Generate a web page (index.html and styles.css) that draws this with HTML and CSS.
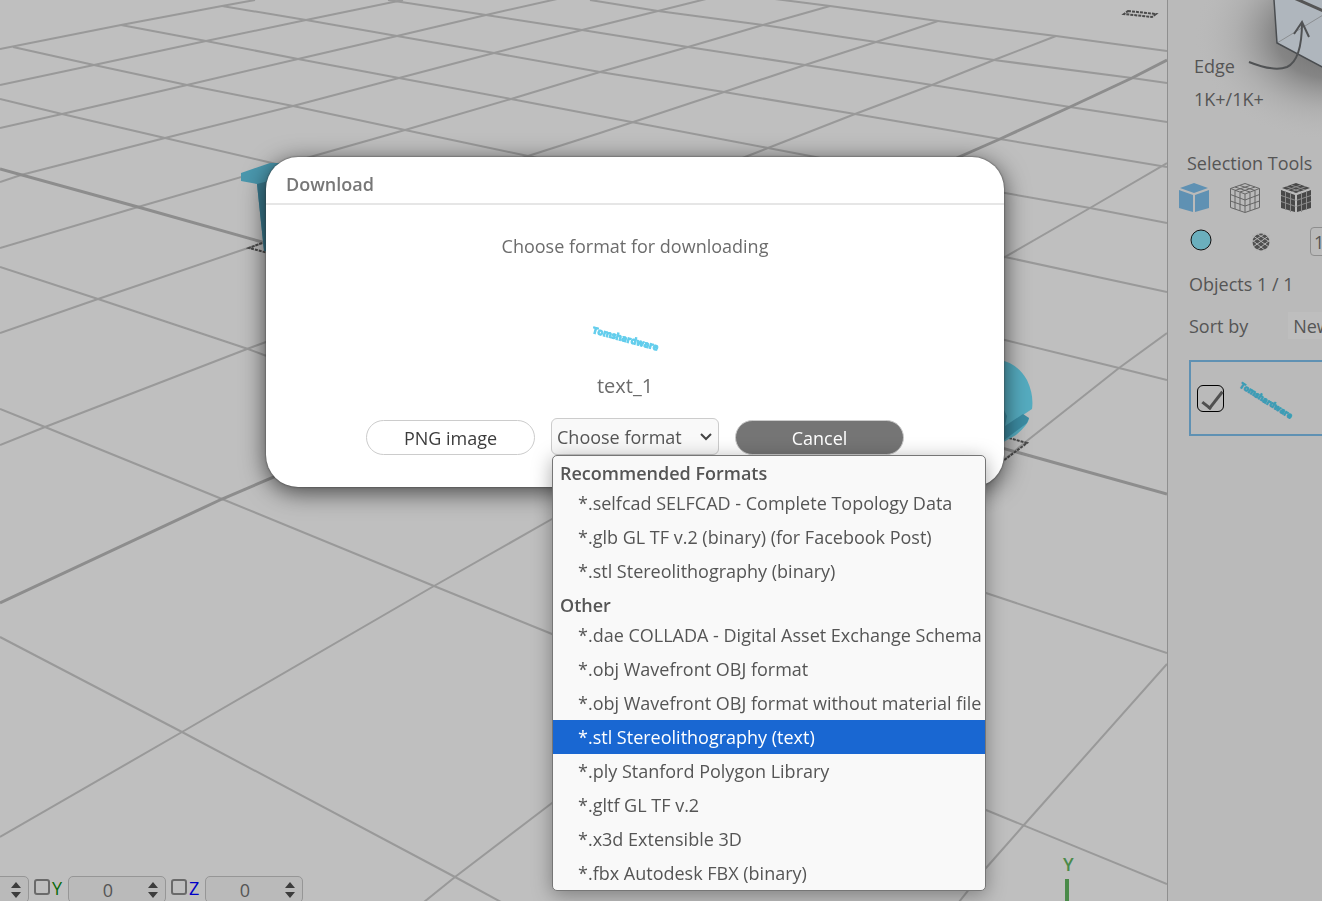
FILE: index.html
```
<!DOCTYPE html>
<html lang="en">
<head>
    <meta charset="utf-8">
    <title>Download</title>
    <link rel="stylesheet" href="styles.css">
</head>
<body>
    <div class="app">
        <main class="viewport">
            <svg class="scene" viewBox="0 0 1167 901" preserveAspectRatio="xMinYMin slice" aria-hidden="true">
                <!-- grid floor -->
                <g class="grid">
                    <path d="M0 49L121 25L222 6L255 0"/>
                    <path d="M0 85L94 65L206 41L306 20L403 0"/>
                    <path d="M0 128L62 114L187 85L298 59L397 36L486 15L557 -1"/>
                    <path d="M0 182L21 175L165 138L293 106L399 78L494 53L582 30L658 11L706 -1"/>
                    <path d="M0 248L138 207L310 157L405 130L511 99L600 72L688 47L763 25L830 6"/>
                    <path d="M0 333L98 299L248 248L528 156L600 133L724 92L805 65L876 42L938 21"/>
                    <path d="M0 445L45 427L247 349L266 342L745 157L768 148L855 114L932 85L994 60L1056 36"/>
                    <path d="M0 837L182 732L434 586L552 519L1005 257L1090 208L1167 163"/>
                    <path d="M424 902L455 877L552 803L1005 459L1028 440L1119 368L1167 333"/>
                    <path d="M959 902L986 868L1023 826L1167 664"/>
                    <path d="M775 -1L830 6L938 21L1056 36L1167 51"/>
                    <path d="M590 0L658 11L763 25L876 42L994 60L1132 78L1167 83"/>
                    <path d="M388 0L486 15L582 30L688 47L805 65L932 85L1070 107L1167 122"/>
                    <path d="M222 6L306 20L397 36L494 53L600 72L724 92L855 114L1000 139L1167 167"/>
                    <path d="M121 25L206 41L298 59L399 78L511 99L600 116L768 148L1005 193L1090 208L1167 223"/>
                    <path d="M13 47L94 65L187 85L293 106L405 130L528 156L1005 257L1167 292"/>
                    <path d="M0 99L62 114L165 138L272 163L1005 340L1119 368L1167 380"/>
                    <path d="M0 267L98 299L248 349L264 355L986 593L1167 653"/>
                    <path d="M0 409L45 427L222 499L434 586L552 634L986 810L1167 884"/>
                    <path d="M0 637L182 732L455 877L501 902"/>
                    <path class="grid-major" d="M0 603L222 499L274 477L959 157L1000 139L1070 107L1132 78L1167 60"/>
                    <path class="grid-major" d="M0 169L138 207L262 242L1020 453L1167 494"/>
                </g>

                <!-- ends of the extruded text -->
                <g class="outline">
                    <path d="M262 243L249 248L268 253M1009 438L1027 443L1003 461"/>
                    <path d="M1128 11L1156 14L1152 17L1124 14z"/>
                </g>
                <path fill="#4a97ad" d="M241 173L270 163L280 163L280 252L264 251L257 184L241 181z"/>
                <path fill="#3a788c" d="M257 184L280 178L280 252L264 251z"/>
                <path fill="#55acc0" d="M1000 360Q1017 363 1027 380Q1034 395 1032 409L1023 415Q1025 418 1029 418Q1029 424 1016 435L1000 444z"/>
                <path fill="#3c8ca3" d="M1000 402L1007 416L1005 426L1023 414L1029 418L1027 423L1003 441z"/>

                <text class="axis-name" x="1063" y="871">Y</text>
                <path fill="#4a8a49" d="M1065 879h4v22h-4z"/>
            </svg>

            <div class="axes">
                <label class="number-box">
                    <input type="text" value="0" aria-label="X value">
                    <svg class="spinner" viewBox="0 0 12 18"><path d="M1 7L6 1L11 7zM1 11L6 17L11 11z"/></svg>
                </label>
                <label class="axis axis-y"><input type="checkbox">Y</label>
                <label class="number-box">
                    <input type="text" value="0" aria-label="Y value">
                    <svg class="spinner" viewBox="0 0 12 18"><path d="M1 7L6 1L11 7zM1 11L6 17L11 11z"/></svg>
                </label>
                <label class="axis axis-z"><input type="checkbox">Z</label>
                <label class="number-box">
                    <input type="text" value="0" aria-label="Z value">
                    <svg class="spinner" viewBox="0 0 12 18"><path d="M1 7L6 1L11 7zM1 11L6 17L11 11z"/></svg>
                </label>
            </div>
        </main>

        <aside class="sidebar">
            <svg class="view-cube" viewBox="0 0 154 150" aria-hidden="true">
                <defs>
                    <radialGradient id="cubeShade">
                        <stop offset="0" stop-color="#686868"/>
                        <stop offset=".4" stop-color="#7c7c7c" stop-opacity=".85"/>
                        <stop offset=".7" stop-color="#a0a0a0" stop-opacity=".4"/>
                        <stop offset="1" stop-color="#bababa" stop-opacity="0"/>
                    </radialGradient>
                </defs>
                <ellipse cx="162" cy="36" rx="136" ry="106" fill="url(#cubeShade)"/>
                <path d="M106 0L109 43L160 70V0z" fill="#afb6bd"/>
                <path d="M109 43L160 12" stroke="#8b8e91" fill="none"/>
                <path d="M106 0L109 43L160 70" stroke="#4a4d50" stroke-width="1.5" fill="none"/>
                <path d="M126 -2L160 13" stroke="#555" stroke-width="3" fill="none"/>
                <path d="M81 62Q106 72 119 67Q134 60 134 22M126 34L134 22L141 37" stroke="#505254" stroke-width="2" fill="none"/>
            </svg>

            <div class="stats">
                <span>Edge</span>
                <span>1K+/1K+</span>
            </div>

            <h2>Selection Tools</h2>
            <div class="tools">
                <button class="tool" aria-label="Object">
                    <svg viewBox="0 0 30 30" fill="#5f91b3">
                        <path d="M15 0L29 5L15 10L1 5zM0 7L14 12V29L0 25zM16 12L30 7V25L16 29z"/>
                    </svg>
                </button>
                <button class="tool" aria-label="Wireframe">
                    <svg viewBox="0 0 30 30" fill="none" stroke="#656565">
                        <path d="M15 .5L29.500 5.500V24.500L15 29.500L.5 24.500V5.500zM.5 5.500L15 11L29.500 5.500M15 11V29M.5 11.500L15 17L29.500 11.500M.5 18L15 23L29.500 18M5 7.500V26M10 9.500V27.500M20 9.500V27.500M25 7.500V26M5 4L20 9M10 2.500L25 7.500M25 4L10 9M20 2.500L5 7.500"/>
                    </svg>
                </button>
                <button class="tool" aria-label="Solid grid">
                    <svg viewBox="0 0 30 30">
                        <path fill="#484848" d="M15 0L29 5L15 10L1 5zM0 7L14 12V29L0 25zM16 12L30 7V25L16 29z"/>
                        <path fill="none" stroke="#8c8c8c" d="M0 12.500L15 17.500L30 12.500M0 18.500L15 23.500L30 18.500M4.500 8V27M9.500 9V29M20.500 9V29M25.500 8V27M5 3.500L19 8.500M10 2L24 7M25 3.500L11 8.500M20 2L6 7"/>
                        <path fill="none" stroke="#bababa" d="M0 6L15 11L30 6M15 11V30"/>
                    </svg>
                </button>
            </div>
            <div class="tools tools-round">
                <button class="tool tool-color" aria-label="Color">
                    <svg viewBox="0 0 22 22"><circle cx="11" cy="11" r="10" fill="#6bafbd" stroke="#111"/></svg>
                </button>
                <button class="tool tool-mesh" aria-label="Mesh">
                    <svg viewBox="0 0 18 18" fill="none">
                        <circle cx="9" cy="9" r="8.500" fill="#505050"/>
                        <path stroke="#b4b4b4" d="M0 7L14 18M0 2L17 14M4 0L18 9M11 0L18 4M18 7L4 18M18 2L1 14M14 0L0 9M7 0L0 4"/>
                    </svg>
                </button>
                <input class="count" type="text" value="1" aria-label="Mesh level">
            </div>

            <h3>Objects 1 / 1</h3>
            <div class="sort">
                <label for="sort">Sort by</label>
                <select id="sort"><option>Newest</option></select>
            </div>

            <div class="object">
                <input type="checkbox" checked aria-label="text_1">
                <svg class="object-thumb" viewBox="0 0 62 46">
                    <text x="2" y="12" transform="rotate(32 2 12)">Tomshardware</text>
                </svg>
            </div>
        </aside>
    </div>

    <div class="overlay">
        <div class="dialog" role="dialog" aria-labelledby="dialog-title">
            <h1 id="dialog-title">Download</h1>
            <div class="dialog-body">
                <p class="prompt">Choose format for downloading</p>
                <svg class="model" viewBox="0 0 72 40">
                    <text x="3" y="15" transform="rotate(15 3 15)">Tomshardware</text>
                </svg>
                <p class="model-name">text_1</p>
                <div class="actions">
                    <button class="button">PNG image</button>
                    <div class="format">
                        <select id="format" aria-label="Choose format">
                            <option>Choose format</option>
                        </select>
                        <svg class="chevron" viewBox="0 0 12 8"><path d="M1 1L6 6L11 1"/></svg>
                        <ul class="menu" role="listbox">
                            <li class="group">Recommended Formats</li>
                            <li role="option">*.selfcad SELFCAD - Complete Topology Data</li>
                            <li role="option">*.glb GL TF v.2 (binary) (for Facebook Post)</li>
                            <li role="option">*.stl Stereolithography (binary)</li>
                            <li class="group">Other</li>
                            <li role="option">*.dae COLLADA - Digital Asset Exchange Schema</li>
                            <li role="option">*.obj Wavefront OBJ format</li>
                            <li role="option">*.obj Wavefront OBJ format without material file</li>
                            <li role="option" class="selected" aria-selected="true">*.stl Stereolithography (text)</li>
                            <li role="option">*.ply Stanford Polygon Library</li>
                            <li role="option">*.gltf GL TF v.2</li>
                            <li role="option">*.x3d Extensible 3D</li>
                            <li role="option">*.fbx Autodesk FBX (binary)</li>
                        </ul>
                    </div>
                    <button class="button button-dark">Cancel</button>
                </div>
            </div>
        </div>
    </div>
</body>
</html>
```
FILE: styles.css
```
* {
    box-sizing: border-box;
}
body {
    margin: 0;
    font-family: "Open Sans", sans-serif;
    font-size: 18px;
    line-height: 24px;
    color: #555;
    background-color: #bfbfbf;
    overflow: hidden;
}
h1, h2, h3, p, ul {
    margin: 0;
    padding: 0;
    font-size: 18px;
    font-weight: 400;
}
button, input, select {
    font: inherit;
    color: inherit;
    margin: 0;
}
.app {
    display: flex;
    height: 100vh;
}

/* 3D view */
.viewport {
    position: relative;
    flex: 1;
    min-width: 0;
    overflow: hidden;
}
.scene {
    display: block;
    width: 100%;
    height: 100%;
}
.grid {
    fill: none;
    stroke: #999;
    stroke-width: 2;
}
.grid-major {
    stroke: #8d8d8d;
    stroke-width: 3;
}
.outline {
    fill: none;
    stroke: #4a4a4a;
    stroke-width: 2;
    stroke-dasharray: 3 1;
}
.axis-name {
    font-size: 18px;
    font-weight: 600;
    fill: #4a8a49;
}
.axes {
    position: absolute;
    left: -69px;
    bottom: -2px;
    display: flex;
}
.number-box {
    display: flex;
    align-items: center;
    width: 98px;
    height: 27px;
    padding-right: 6px;
    border: 1px solid #969696;
    border-radius: 5px;
    background-color: #bababa;
}
.number-box input {
    flex: 1;
    min-width: 0;
    padding: 0;
    border: none;
    background: none;
    text-align: center;
}
.spinner {
    width: 12px;
    height: 18px;
    fill: #3c3c3c;
}
.axis {
    display: flex;
    width: 39px;
    padding-left: 5px;
    gap: 2px;
}
.axis input {
    appearance: none;
    width: 16px;
    height: 16px;
    margin-top: 3px;
    border: 2px solid #6a6a6a;
    border-radius: 3px;
}
.axis-y {
    color: #0a6a0a;
}
.axis-z {
    color: #0000c8;
}

/* Right panel */
.sidebar {
    position: relative;
    width: 155px;
    border-left: 1px solid #8f8f8f;
    background-color: #bababa;
    overflow: hidden;
}
.view-cube {
    position: absolute;
    top: 0;
    left: 0;
    width: 154px;
    height: 150px;
}
.stats {
    position: relative;
    display: flex;
    flex-direction: column;
    gap: 9px;
    padding: 54px 0 0 26px;
}
.sidebar h2 {
    padding: 40px 0 0 19px;
    white-space: nowrap;
}
.tools {
    display: flex;
    gap: 21px;
    padding: 8px 0 0 11px;
}
.tool {
    flex: none;
    display: flex;
    padding: 0;
    border: none;
    background: none;
}
.tool svg {
    width: 30px;
    height: 30px;
}
.tools-round {
    align-items: center;
    gap: 40px;
    padding: 14px 0 0 22px;
}
.tool-color {
    margin-bottom: 4px;
}
.tool-color svg {
    width: 22px;
    height: 22px;
}
.tool-mesh svg {
    width: 18px;
    height: 18px;
}
.count {
    flex: none;
    width: 60px;
    height: 29px;
    padding: 0 3px;
    border: 1px solid #8e8e8e;
    border-radius: 4px;
    background: none;
}
.sidebar h3 {
    padding: 16px 0 0 21px;
}
.sort {
    display: flex;
    align-items: center;
    gap: 40px;
    padding: 16px 0 0 21px;
    white-space: nowrap;
}
.sort select {
    appearance: none;
    flex: none;
    width: 110px;
    height: 27px;
    padding: 0 5px;
    border: none;
    background-color: #bebebe;
}
.object {
    display: flex;
    align-items: center;
    gap: 13px;
    width: 260px;
    height: 76px;
    margin: 21px 0 0 21px;
    padding-left: 6px;
    border: 2px solid #5f91b3;
}
.object input {
    appearance: none;
    width: 27px;
    height: 27px;
    border: 1px solid #000;
    border-radius: 6px;
}
.object input::before {
    content: "";
    display: block;
    width: 8px;
    height: 19px;
    margin: 1px 0 0 9px;
    border: solid #505050;
    border-width: 0 3px 3px 0;
    transform: rotate(38deg);
}
.object-thumb {
    width: 62px;
    height: 46px;
    fill: #3d9cb5;
    stroke: #3d9cb5;
    font-size: 8px;
    font-weight: 700;
}

/* Download dialog */
.overlay {
    position: fixed;
    inset: 0;
    padding: 157px 52px 0 0;
}
.dialog {
    width: 738px;
    max-width: 100%;
    margin: 0 auto;
    border-radius: 32px;
    background-color: #fff;
    box-shadow: 0 0 2px #333, 0 5px 24px rgba(0, 0, 0, 0.65);
    color: #6c6c6c;
}
.dialog h1 {
    padding: 15px 20px 7px;
    border-bottom: 2px solid #e6e6e6;
    font-weight: 600;
    color: #777;
}
.dialog-body {
    display: flex;
    flex-direction: column;
    align-items: center;
    padding: 29px 0 32px;
}
.model {
    width: 72px;
    height: 40px;
    margin: 60px 20px 16px 0;
    fill: #62cdec;
    stroke: #62cdec;
    font-size: 9px;
    font-weight: 700;
}
.model-name {
    margin-right: 20px;
    font-size: 20px;
}
.actions {
    display: flex;
    align-items: center;
    gap: 16px;
    margin-top: 20px;
}
.button {
    width: 169px;
    height: 35px;
    margin-top: 2px;
    border: 1px solid #ccc;
    border-radius: 18px;
    background-color: #fff;
    color: #3c3c3c;
}
.button-dark {
    background-color: #757575;
    color: #fff;
}
.format {
    position: relative;
}
.format select {
    appearance: none;
    width: 168px;
    height: 37px;
    padding: 0 5px;
    border: 1px solid #ccc;
    border-radius: 6px;
    background-color: #f9f9f9;
    color: #555;
}
.chevron {
    position: absolute;
    top: 15px;
    right: 7px;
    width: 12px;
    height: 8px;
    fill: none;
    stroke: #444;
    stroke-width: 2;
}
.menu {
    position: absolute;
    top: 37px;
    left: 1px;
    width: 434px;
    border: 1px solid #767676;
    border-radius: 5px;
    background-color: #f9f9f9;
    box-shadow: 0 4px 20px rgba(0, 0, 0, 0.35);
    list-style: none;
    line-height: 34px;
    white-space: nowrap;
    color: #555;
    overflow: hidden;
}
.menu li {
    padding-left: 25px;
}
.menu .group {
    padding: 4px 0 0 7px;
    line-height: 26px;
    font-weight: 600;
}
.menu .selected {
    background-color: #1967d2;
    color: #fff;
}
```
